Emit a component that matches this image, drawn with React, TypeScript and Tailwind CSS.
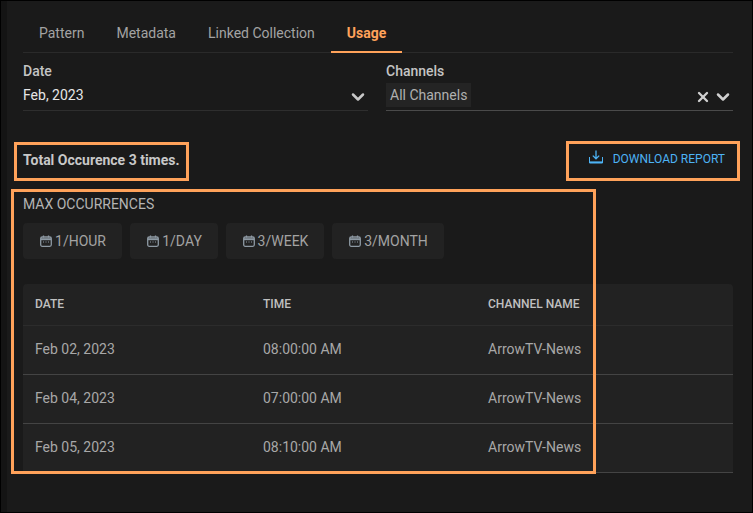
import { ChevronDown, X } from 'lucide-react';

const tabs = ['Pattern', 'Metadata', 'Linked Collection', 'Usage'];
const limits = [
  { label: '1/HOUR', width: 'w-[99px]' },
  { label: '1/DAY', width: 'w-[88px]' },
  { label: '3/WEEK', width: 'w-[98px]' },
  { label: '3/MONTH', width: 'w-[112px]' },
];
const rows = [
  { date: 'Feb 02, 2023', time: '08:00:00 AM', channel: 'ArrowTV-News' },
  { date: 'Feb 04, 2023', time: '07:00:00 AM', channel: 'ArrowTV-News' },
  { date: 'Feb 05, 2023', time: '08:10:00 AM', channel: 'ArrowTV-News' },
];

const CalendarIcon = () => (
  <svg width="12" height="12" viewBox="0 0 12 12" fill="none" className="text-[#8d99a3]">
    <rect x="0.7" y="2" width="10.6" height="9.3" rx="1.5" stroke="currentColor" strokeWidth="1.3" />
    <path d="M1 4.2h10" stroke="currentColor" strokeWidth="2" />
    <path d="M3.5 0.5v2M8.5 0.5v2" stroke="currentColor" strokeWidth="1.3" />
    <path d="M3 7h1M5.5 7h1M8 7h1" stroke="currentColor" strokeWidth="1.2" />
  </svg>
);

const DownloadIcon = () => (
  <svg width="14" height="14" viewBox="0 0 14 14" fill="none" className="mb-[5px] text-[#4db3f5]">
    <path d="M0.5 7v6h13V7" stroke="currentColor" strokeWidth="1" />
    <path d="M7 0.5v8M3.8 5.6L7 8.8l3.2-3.2" stroke="currentColor" strokeWidth="1.3" />
    <path d="M0.5 12.2h13" stroke="currentColor" strokeWidth="1.6" />
  </svg>
);

const App = () => {
  return (
    <div className="relative h-[513px] w-[753px] overflow-hidden border border-black bg-[#1a1a1a] pl-[6px] font-['Roboto',sans-serif]">
      <div className="absolute left-0 top-0 h-full w-[6px] bg-[#141414]" />
      <div className="ml-[16px] mr-[19px]">
        <div className="flex h-[52px] items-end border-b border-[#2a2a2a]">
          {tabs.map((tab) => (
            <div
              key={tab}
              className={`-mb-px flex h-[36px] items-center border-b-2 px-4 pb-[2px] text-sm ${
                tab === 'Usage'
                  ? 'border-[#ffa25a] font-bold text-[#ffa25a]'
                  : 'border-transparent text-[#a3a3a3]'
              }`}
            >
              {tab}
            </div>
          ))}
        </div>

        <div className="mt-[8px] flex gap-[18px]">
          <div className="w-[345px]">
            <div className="text-sm font-medium leading-[20px] text-[#c4c4c4]">Date</div>
            <div className="mt-[2px] flex h-[28px] items-center justify-between border-b border-[#2e2e2e] pb-[4px] text-sm text-[#e6e6e6]">
              <span>Feb, 2023</span>
              <ChevronDown size={20} strokeWidth={3} className="mt-[5px] text-[#c8c8c8]" />
            </div>
          </div>
          <div className="w-[347px]">
            <div className="text-sm font-medium leading-[20px] text-[#c4c4c4]">Channels</div>
            <div className="mt-[2px] flex h-[28px] items-center justify-between border-b border-[#4a4a4a] pb-[3px] text-sm text-[#b0b0b0]">
              <span className="flex h-[24px] items-center bg-[#242424] px-1">All Channels</span>
              <span className="mt-[3px] flex items-center gap-[2px] text-[#d0d0d0]">
                <X size={16} strokeWidth={3.5} />
                <ChevronDown size={20} strokeWidth={3} />
              </span>
            </div>
          </div>
        </div>

        <div className="mt-[31px] flex h-[36px] items-center justify-between">
          <div className="text-sm font-bold text-[#c8c8c8]">Total Occurence 3 times.</div>
          <div className="mr-[8px] flex items-center gap-[10px] pb-[2px] text-xs text-[#4db3f5]">
            <DownloadIcon />
            <span>DOWNLOAD REPORT</span>
          </div>
        </div>

        <div className="mt-[16px] text-sm leading-[20px] text-[#b4b4b4]">MAX OCCURRENCES</div>
        <div className="mt-[9px] flex gap-2">
          {limits.map((limit) => (
            <div
              key={limit.label}
              className={`flex h-[36px] items-center justify-center gap-[3px] rounded bg-[#222222] pl-px text-sm text-[#a3a3a3] ${limit.width}`}
            >
              <CalendarIcon />
              <span>{limit.label}</span>
            </div>
          ))}
        </div>

        <div className="mt-[25px] rounded-t bg-[#222222]">
          <div className="grid h-[42px] grid-cols-[228px_225px_1fr] items-center border-b border-[#2c2c2c] px-3 pb-[2px] text-xs font-medium text-[#c0c0c0]">
            <span>DATE</span>
            <span>TIME</span>
            <span>CHANNEL NAME</span>
          </div>
          {rows.map((row) => (
            <div
              key={row.date}
              className="grid h-[49px] grid-cols-[228px_225px_1fr] items-center border-b border-[#444444] px-3 pb-[2px] text-sm text-[#a8a8a8]"
            >
              <span>{row.date}</span>
              <span>{row.time}</span>
              <span>{row.channel}</span>
            </div>
          ))}
        </div>
      </div>

      <div className="absolute left-[13px] top-[141px] h-[39px] w-[175px] border-[3px] border-[#ffa25a]" />
      <div className="absolute left-[565px] top-[140px] h-[40px] w-[174px] border-[3px] border-[#ffa25a]" />
      <div className="absolute left-[10px] top-[188px] h-[285px] w-[585px] border-[3px] border-[#ffa25a]" />
    </div>
  );
};

export default App;
